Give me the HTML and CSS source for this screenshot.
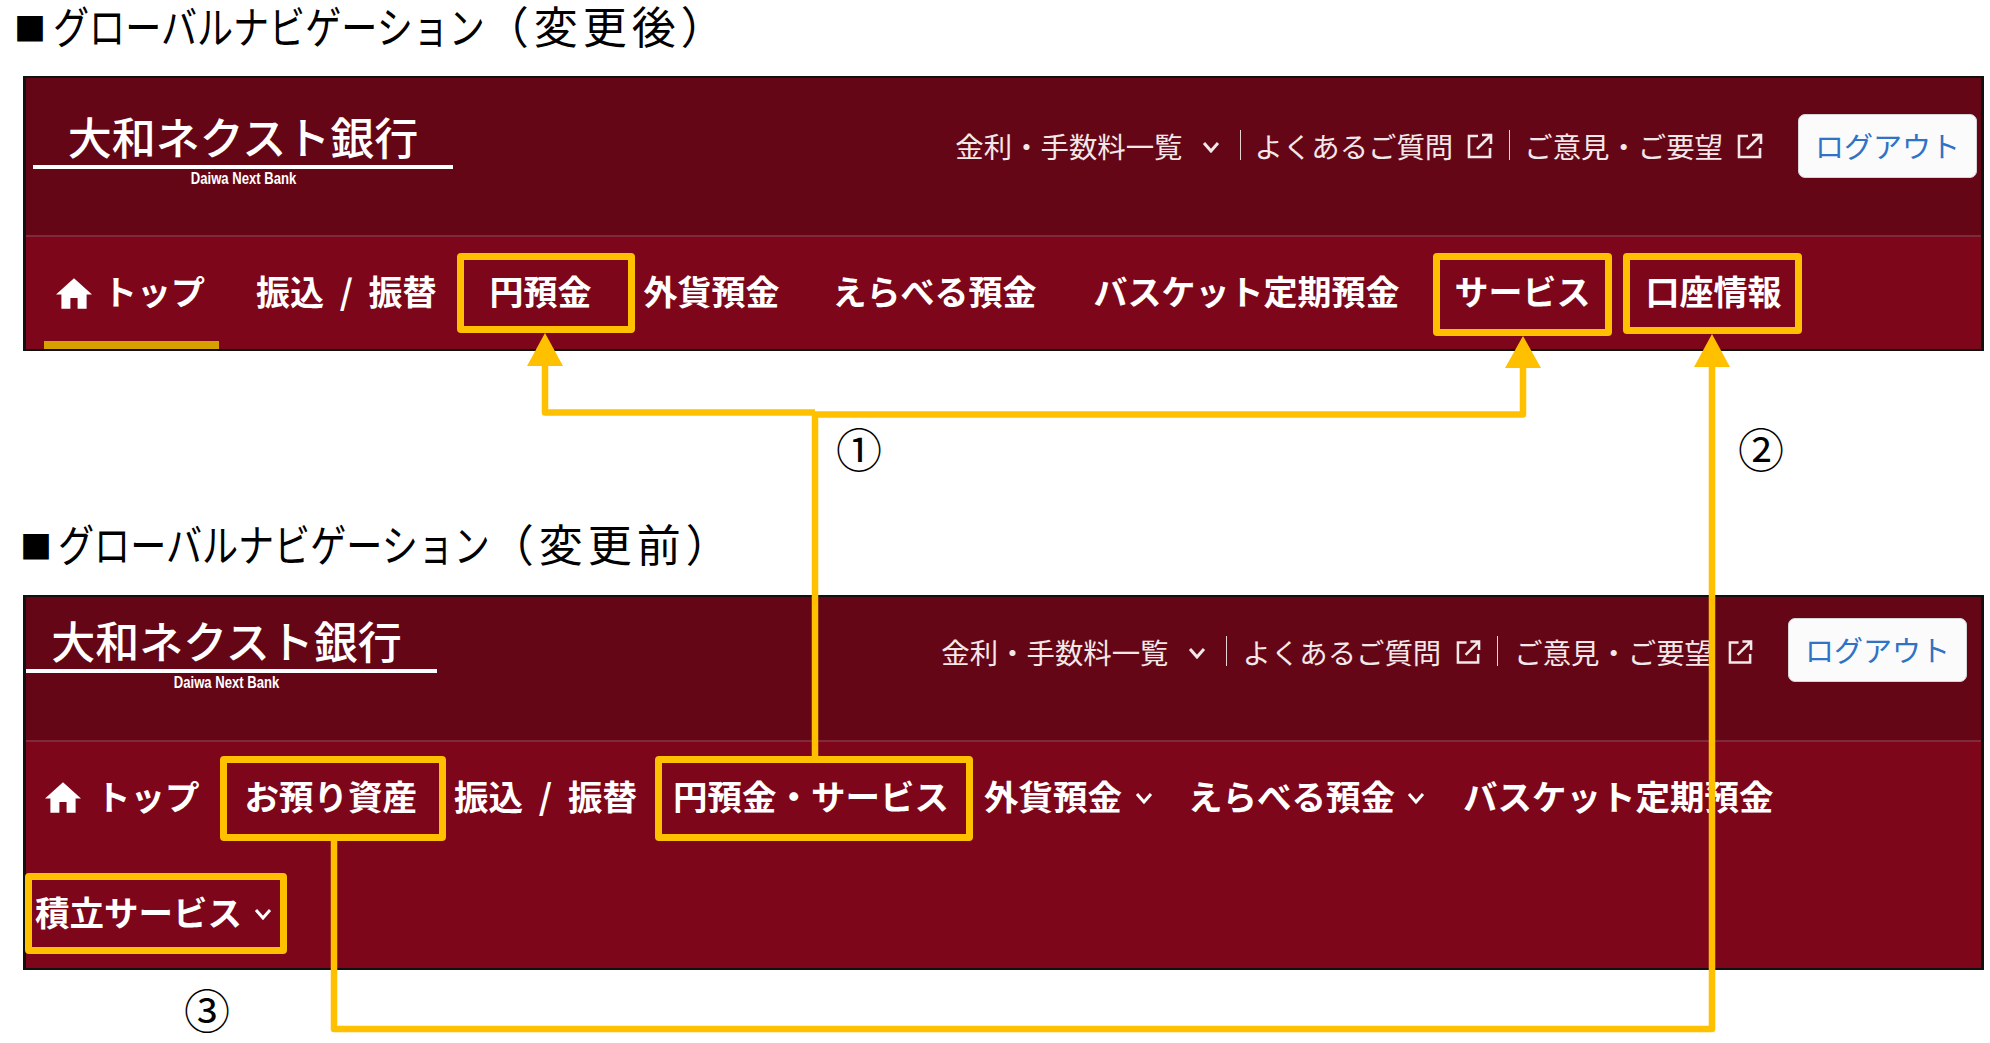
FILE: index.html
```html
<!DOCTYPE html>
<html lang="ja">
<head>
  <meta charset="UTF-8" />
  <meta name="viewport" content="width=device-width, initial-scale=1.0"/>
  <title>グローバルナビゲーション</title>
  <link rel="stylesheet" href="styles.css">
</head>
<body>
  <svg class="icon-defs" aria-hidden="true">
    <symbol id="ico-home" viewBox="2 3 20 17"><path d="M10 20v-6h4v6h5v-8h3L12 3 2 12h3v8z" fill="currentColor"/></symbol>
    <symbol id="ico-ext" viewBox="0 0 26 26"><path d="M11 3H2v21h21v-9M10 16 23 3M15 2h9v9" fill="none" stroke="currentColor" stroke-width="2.6"/></symbol>
    <symbol id="ico-chev" viewBox="0 0 18 12"><path d="M2 2l7 8 7-8" fill="none" stroke="currentColor" stroke-width="3"/></symbol>
  </svg>

  <div class="page">
    <h2 class="section-title title-new"><span class="square">■</span><span class="title-kana">グローバルナビゲーション</span><span class="title-kanji">（変更後）</span></h2>

    <section class="panel panel-new">
      <div class="top-band">
        <div class="logo">
          <div class="logo-name">大和ネクスト銀行</div>
          <div class="logo-line"></div>
          <div class="logo-sub"><span>Daiwa Next Bank</span></div>
        </div>
        <div class="top-right">
          <div class="top-links">
            <span>金利・手数料一覧</span>
            <svg class="chev-top"><use href="#ico-chev"/></svg>
            <i class="sep"></i>
            <span>よくあるご質問</span>
            <svg class="ext"><use href="#ico-ext"/></svg>
            <i class="sep"></i>
            <span>ご意見・ご要望</span>
            <svg class="ext"><use href="#ico-ext"/></svg>
          </div>
          <a class="logout">ログアウト</a>
        </div>
      </div>
      <nav class="nav">
        <div class="nav-row new-row">
          <a class="item home active"><svg class="home-ico"><use href="#ico-home"/></svg>トップ</a>
          <a class="item furikomi">振込 / 振替</a>
          <a class="item mark yen">円預金</a>
          <a class="item gaika">外貨預金</a>
          <a class="item erabel">えらべる預金</a>
          <a class="item basket">バスケット定期預金</a>
          <a class="item mark service">サービス</a>
          <a class="item mark koza">口座情報</a>
        </div>
      </nav>
    </section>

    <h2 class="section-title title-old"><span class="square">■</span><span class="title-kana">グローバルナビゲーション</span><span class="title-kanji">（変更前）</span></h2>

    <section class="panel panel-old">
      <div class="top-band">
        <div class="logo">
          <div class="logo-name">大和ネクスト銀行</div>
          <div class="logo-line"></div>
          <div class="logo-sub"><span>Daiwa Next Bank</span></div>
        </div>
        <div class="top-right">
          <div class="top-links">
            <span>金利・手数料一覧</span>
            <svg class="chev-top"><use href="#ico-chev"/></svg>
            <i class="sep"></i>
            <span>よくあるご質問</span>
            <svg class="ext"><use href="#ico-ext"/></svg>
            <i class="sep"></i>
            <span>ご意見・ご要望</span>
            <svg class="ext"><use href="#ico-ext"/></svg>
          </div>
          <a class="logout">ログアウト</a>
        </div>
      </div>
      <nav class="nav">
        <div class="nav-row old-row">
          <a class="item home"><svg class="home-ico"><use href="#ico-home"/></svg>トップ</a>
          <a class="item mark azukari">お預り資産</a>
          <a class="item furikomi">振込 / 振替</a>
          <a class="item mark yen-service">円預金・サービス</a>
          <a class="item gaika">外貨預金<svg class="chev"><use href="#ico-chev"/></svg></a>
          <a class="item erabel">えらべる預金<svg class="chev"><use href="#ico-chev"/></svg></a>
          <a class="item basket">バスケット定期預金</a>
        </div>
        <div class="nav-row old-row2">
          <a class="item mark tsumitate">積立サービス<svg class="chev"><use href="#ico-chev"/></svg></a>
        </div>
      </nav>
    </section>

    <!-- annotation arrows drawn over both panels -->
    <svg class="arrows" width="1990" height="1043" viewBox="0 0 1990 1043">
      <g fill="none" stroke="#ffc000" stroke-width="6.5" stroke-linejoin="round">
        <path d="M545 360V412.5H815"/>
        <path d="M815 414.5H1523V362"/>
        <path d="M815 412V756"/>
        <path d="M334 841V1029H1712V362"/>
      </g>
      <g fill="#ffc000">
        <polygon points="545,333 527,366 563,366"/>
        <polygon points="1523,336 1505,368 1541,368"/>
        <polygon points="1712,334 1694,367 1730,367"/>
      </g>
    </svg>
    <span class="num num-1">①</span>
    <span class="num num-2">②</span>
    <span class="num num-3">③</span>
  </div>
</body>
</html>
```

FILE: styles.css
```css
html, body {
  margin: 0;
  background-color: #ffffff;
}

body {
  font-family: "Noto Sans CJK JP", sans-serif;
  color: #000000;
  overflow: hidden;
}

.icon-defs {
  display: none;
}

.page {
  position: relative;
  width: 1990px;
  height: 1043px;
}

/* section headings */
.section-title {
  display: flex;
  align-items: center;
  height: 54px;
  margin: 0;
  font-size: 44px;
  font-weight: 400;
  line-height: 44px;
  white-space: nowrap;
}

.title-new {
  padding-left: 14px;
  margin-bottom: 22px;
}

.title-old {
  padding-left: 20px;
  margin-top: 167px;
  margin-bottom: 23px;
}

.square {
  width: 32px;
  font-size: 32px;
}

/* the kana in the original font is much narrower than the kanji */
.title-kana {
  display: inline-block;
  margin-left: 7px;
  margin-right: -95px;
  margin-bottom: 4px;
  transform: scaleX(0.82);
  transform-origin: left center;
}

.title-old .title-kana {
  margin-left: 6px;
}

.title-kanji {
  margin-bottom: 4px;
  letter-spacing: 5px;
}

/* screenshot panels */
.panel {
  margin-left: 23px;
  width: 1961px;
  box-sizing: border-box;
  border: 3px solid #111111;
  border-top-width: 2px;
  border-bottom-width: 2px;
  background-color: #7d061a;
}

.top-band {
  display: flex;
  justify-content: space-between;
  box-sizing: border-box;
  background-color: #650616;
  border-bottom: 2px solid #7f2b3a;
}

.panel-new .top-band {
  height: 159px;
  padding-top: 36px;
  padding-left: 7px;
  padding-right: 4px;
}

.panel-old .top-band {
  height: 145px;
  padding-top: 21px;
  padding-right: 14px;
}

/* logo */
.logo {
  color: #ffffff;
  text-align: center;
}

.panel-new .logo {
  width: 420px;
}

.panel-old .logo {
  width: 401px;
}

.logo-name {
  font-size: 44px;
  font-weight: 500;
  line-height: 44px;
  white-space: nowrap;
}

.logo-line {
  height: 4px;
  margin-top: 7px;
  background-color: #ffffff;
}

.panel-old .logo-line {
  margin-right: -10px;
}

.logo-sub {
  margin-top: 3px;
  font-family: "Liberation Sans", sans-serif;
  font-size: 17px;
  font-weight: 700;
  line-height: 14px;
}

.logo-sub span {
  display: inline-block;
  transform: scaleX(0.77);
  white-space: nowrap;
}

/* utility links and logout button */
.top-right {
  display: flex;
  align-items: flex-start;
}

.top-links {
  display: flex;
  align-items: center;
  height: 64px;
  margin-top: -1px;
  font-size: 28.4px;
  color: #f3e8e9;
  white-space: nowrap;
}

.panel-old .top-links {
  margin-top: 1px;
}

.chev-top {
  width: 18px;
  height: 12px;
  margin-left: 19px;
  margin-right: 20px;
  margin-top: 4px;
}

.sep {
  width: 1px;
  height: 30px;
  background-color: #e6d3d5;
  margin-right: 14px;
}

.ext {
  width: 26px;
  height: 26px;
  margin-left: 14px;
  margin-right: 16px;
  margin-top: 2px;
}

.panel-old .sep {
  margin-right: 16px;
}

.panel-old .ext {
  margin-left: 15px;
  width: 25px;
}

.top-links .ext:last-child {
  margin-right: 35px;
}

.logout {
  display: flex;
  align-items: center;
  justify-content: center;
  width: 179px;
  height: 64px;
  box-sizing: border-box;
  padding-bottom: 3px;
  background-color: #fbfbfc;
  border: 1px solid #d5d5d8;
  border-radius: 7px;
  font-size: 29px;
  color: #2f72c6;
}

/* global nav */
.nav-row {
  display: flex;
  align-items: center;
  font-size: 34px;
  font-weight: 700;
  color: #ffffff;
  white-space: nowrap;
}

.new-row {
  height: 112px;
}

.old-row {
  height: 85px;
  padding-top: 14px;
  font-size: 34.5px;
}

.old-row2 {
  height: 81px;
  margin-top: 32px;
  padding-bottom: 14px;
  font-size: 34.5px;
}

.item {
  display: flex;
  align-items: center;
  box-sizing: border-box;
  padding-bottom: 5px;
  word-spacing: 8px;
}

.old-row .item {
  padding-bottom: 7px;
}

.mark {
  height: 100%;
  border: 7px solid #ffc000;
  border-radius: 4px;
}

.home-ico {
  width: 36px;
  height: 31px;
  margin-top: 5px;
  margin-right: 15px;
}

.chev {
  width: 18px;
  height: 12px;
  margin-top: 5px;
}

.active {
  align-self: stretch;
  border-top: 8px solid transparent;
  border-bottom: 8px solid #d6a000;
}

/* changed layout */
.new-row .home {
  margin-left: 18px;
  padding-left: 12px;
  padding-right: 14px;
}

.new-row .home-ico {
  margin-right: 11px;
}

.new-row .furikomi {
  margin-left: 37px;
}

.new-row .yen {
  align-self: flex-start;
  height: 80px;
  margin-top: 16px;
  margin-left: 20px;
  padding-left: 26px;
  padding-right: 36px;
}

.new-row .gaika {
  margin-left: 9px;
}

.new-row .erabel {
  margin-left: 53px;
}

.new-row .basket {
  margin-left: 57px;
}

.new-row .service {
  align-self: flex-start;
  height: 83px;
  margin-top: 16px;
  margin-left: 33px;
  padding: 0 14px 8px 15px;
}

.new-row .koza {
  align-self: flex-start;
  height: 81px;
  margin-top: 16px;
  margin-left: 11px;
  padding: 0 13px 6px 16px;
}

/* previous layout */
.old-row .home {
  margin-left: 19px;
}

.old-row .azukari {
  margin-left: 20px;
  padding-left: 18px;
  padding-right: 22px;
}

.old-row .furikomi {
  margin-left: 8px;
}

.old-row .yen-service {
  margin-left: 18px;
  padding-left: 11px;
  padding-right: 17px;
}

.old-row .gaika {
  margin-left: 11px;
}

.old-row .gaika .chev {
  margin-left: 13px;
}

.old-row .erabel .chev {
  margin-left: 12px;
}

.old-row .erabel {
  margin-left: 35px;
}

.old-row .basket {
  margin-left: 38px;
}

.tsumitate {
  width: 262px;
  margin-left: -1px;
  padding-left: 3px;
}

.tsumitate .chev {
  width: 20px;
  margin-left: 11px;
}

/* annotations */
.arrows {
  position: absolute;
  top: 0;
  left: 0;
  pointer-events: none;
}

.num {
  position: absolute;
  width: 60px;
  height: 60px;
  font-size: 46px;
  line-height: 60px;
  text-align: center;
}

.num-1 {
  left: 829px;
  top: 417px;
}

.num-2 {
  left: 1731px;
  top: 417px;
}

.num-3 {
  left: 177px;
  top: 978px;
}
```
